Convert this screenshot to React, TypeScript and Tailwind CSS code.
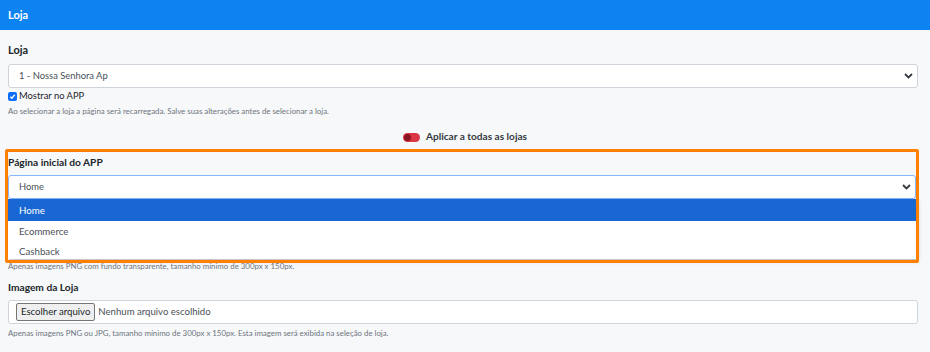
import React from "react";

const Chevron = () => (
  <svg width="9" height="6" viewBox="0 0 9 6" className="absolute right-[4px] top-1/2 -translate-y-1/2">
    <path d="M1 1l3.5 3.5L8 1" fill="none" stroke="#343a40" strokeWidth="1.8" />
  </svg>
);

export default function App() {
  return (
    <div className="relative w-[930px] h-[352px] bg-[#f7f8fa] overflow-hidden" style={{ fontFamily: "Lato, 'Liberation Sans', sans-serif" }}>
      <div className="h-[30px] bg-[#0d83f2] flex items-center px-2">
        <span className="text-white font-bold text-[11px]">Loja</span>
      </div>
      <div className="px-2 pt-[13px]">
        <div className="text-[11px] font-bold text-[#212529] leading-[14px]">Loja</div>
        <div className="relative mt-[7px] h-[24px] bg-white border border-[#ced4da] rounded-[3px] mr-[4px] flex items-center pl-[10px] text-[9.4px] text-[#495057]">
          1 - Nossa Senhora Ap
          <Chevron />
        </div>
        <div className="flex items-center gap-[2px] mt-[2px] h-[12px]">
          <span className="w-[9px] h-[9px] bg-[#0d6efd] rounded-[2px] flex items-center justify-center">
            <svg width="7" height="7" viewBox="0 0 8 8"><path d="M1.5 4.2l1.8 1.8L6.6 2" fill="none" stroke="white" strokeWidth="1.5" /></svg>
          </span>
          <span className="text-[9.4px] text-[#212529]">Mostrar no APP</span>
        </div>
        <div className="text-[7.85px] text-[#6c757d] mt-[4px] leading-[10px]">Ao selecionar a loja a página será recarregada. Salve suas alterações antes de selecionar a loja.</div>
        <div className="flex items-center justify-center gap-[6px] mt-[14px] h-[14px]">
          <span className="w-[17px] h-[9px] rounded-full bg-[#dc3545] relative">
            <span className="absolute left-[1px] top-[1px] w-[7px] h-[7px] rounded-full bg-[#8a1424]" />
          </span>
          <span className="text-[10.1px] font-bold text-[#343a40]">Aplicar a todas as lojas</span>
        </div>
        <div className="text-[10.2px] font-bold text-[#212529] leading-[14px] mt-[11px]">Página inicial do APP</div>
        <div className="relative mt-[6px] h-[24px] bg-white border border-[#86b7fe] rounded-[3px] mr-[6px] flex items-center pl-[10px] text-[9.4px] text-[#495057]">
          Home
          <Chevron />
        </div>
        <div className="h-[14px] mt-[14px]" />
        <div className="mt-[6px] h-[24px] bg-white border border-[#ced4da] rounded-[3px] mr-[4px]" />
        <div className="text-[7.85px] text-[#6c757d] mt-[4px] leading-[10px]">Apenas imagens PNG com fundo transparente, tamanho mínimo de 300px x 150px.</div>
        <div className="text-[10.2px] font-bold text-[#212529] leading-[14px] mt-[9px]">Imagem da Loja</div>
        <div className="mt-[6px] h-[24px] bg-white border border-[#ced4da] rounded-[3px] mr-[4px] flex items-center pl-[7px] gap-[3px]">
          <span className="h-[18px] px-[4px] bg-[#efefef] border border-[#767676] rounded-[2px] text-[9.6px] text-[#212529] flex items-center">Escolher arquivo</span>
          <span className="text-[9.6px] text-[#495057]">Nenhum arquivo escolhido</span>
        </div>
        <div className="text-[7.85px] text-[#6c757d] mt-[4px] leading-[10px]">Apenas imagens PNG ou JPG, tamanho mínimo de 300px x 150px. Esta imagem será exibida na seleção de loja.</div>
      </div>

      {/* dropdown menu */}
      <div className="absolute left-[8px] top-[199px] w-[908px] h-[60px] bg-white shadow-[2px_2px_4px_rgba(0,0,0,0.25)] text-[9.7px] text-[#495057]">
        <div className="h-[22px] bg-[#1967d2] text-white flex items-center pl-[11px]">Home</div>
        <div className="h-[20px] flex items-center pl-[11px]">Ecommerce</div>
        <div className="h-[20px] flex items-center pl-[11px]">Cashback</div>
      </div>
      {/* annotation */}
      <div className="absolute left-[5px] top-[149px] w-[914px] h-[114px] border-[3px] border-[#ff8000] rounded-[2px] pointer-events-none" />
    </div>
  );
}
